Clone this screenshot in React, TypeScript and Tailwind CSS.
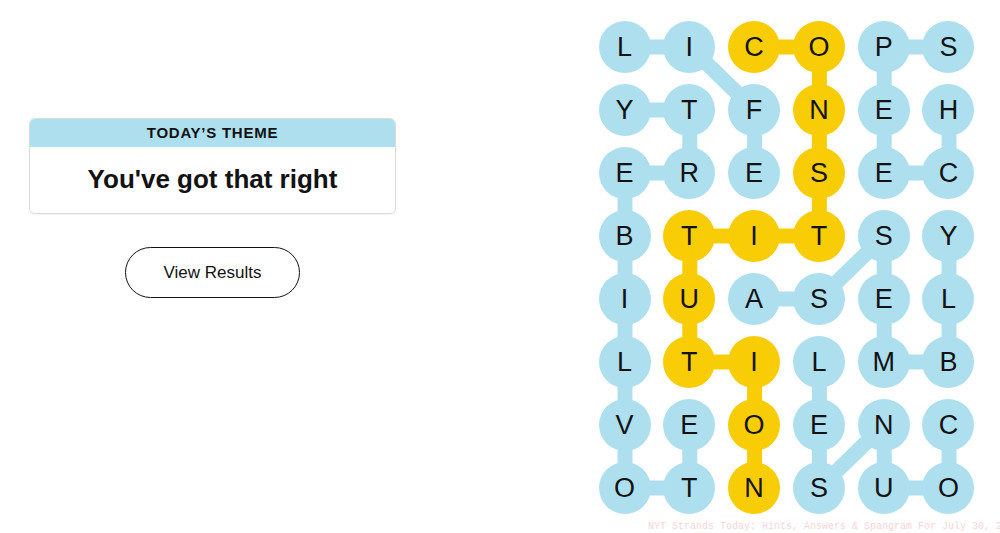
import React from 'react';

const LETTERS = [
  'LICOPS',
  'YTFNEH',
  'ERESEC',
  'BTITSY',
  'IUASEL',
  'LTILMB',
  'VEOENC',
  'OTNSUO',
];

// [row, col] of every spangram cell
const GOLD = new Set(['0,2', '0,3', '1,3', '2,3', '3,3', '3,2', '3,1', '4,1', '5,1', '5,2', '6,2', '7,2']);

type Link = [number, number, number, number];

const BLUE_LINKS: Link[] = [
  [0, 0, 0, 1], [0, 1, 1, 2], [0, 4, 0, 5], [0, 4, 1, 4],
  [1, 0, 1, 1], [1, 1, 2, 1], [1, 2, 2, 2], [1, 4, 2, 4], [1, 5, 2, 5],
  [2, 0, 2, 1], [2, 0, 3, 0], [2, 4, 2, 5],
  [3, 0, 4, 0], [3, 4, 4, 3], [3, 4, 4, 4], [3, 5, 4, 5],
  [4, 0, 5, 0], [4, 2, 4, 3], [4, 4, 5, 4], [4, 5, 5, 5],
  [5, 0, 6, 0], [5, 3, 6, 3], [5, 4, 5, 5],
  [6, 0, 7, 0], [6, 1, 7, 1], [6, 3, 7, 3], [6, 4, 7, 3], [6, 4, 7, 4], [6, 5, 7, 5],
  [7, 0, 7, 1], [7, 4, 7, 5],
];

const GOLD_LINKS: Link[] = [
  [0, 2, 0, 3], [0, 3, 1, 3], [1, 3, 2, 3], [2, 3, 3, 3], [3, 3, 3, 2], [3, 2, 3, 1],
  [3, 1, 4, 1], [4, 1, 5, 1], [5, 1, 5, 2], [5, 2, 6, 2], [6, 2, 7, 2],
];

const cx = (c: number) => 26 + c * 64.8;
const cy = (r: number) => 26 + r * 63;

function Board() {
  return (
    <div className="relative">
      {/* connectors drawn under the letter bubbles */}
      <svg className="absolute inset-0 z-0" width={376} height={493}>
        {BLUE_LINKS.map(([r1, c1, r2, c2], i) => (
          <line key={'b' + i} x1={cx(c1)} y1={cy(r1)} x2={cx(c2)} y2={cy(r2)} stroke="#aedfee" strokeWidth={15} />
        ))}
        {GOLD_LINKS.map(([r1, c1, r2, c2], i) => (
          <line key={'g' + i} x1={cx(c1)} y1={cy(r1)} x2={cx(c2)} y2={cy(r2)} stroke="#f8cd05" strokeWidth={15} />
        ))}
      </svg>
      <div className="relative z-10 grid grid-cols-[repeat(6,52px)] gap-x-[12.8px] gap-y-[11px]">
        {LETTERS.flatMap((row, r) =>
          row.split('').map((ch, c) => (
            <div
              key={r + '-' + c}
              className={
                'w-[52px] h-[52px] rounded-full flex items-center justify-center text-[27px] text-[#121212] leading-none ' +
                (GOLD.has(r + ',' + c) ? 'bg-[#f8cd05]' : 'bg-[#aedfee]')
              }
            >
              {ch}
            </div>
          ))
        )}
      </div>
    </div>
  );
}

export default function App() {
  return (
    <div className="relative w-[1000px] h-[533px] bg-white overflow-hidden flex font-['Liberation_Sans',Arial,sans-serif]">
      {/* Theme card + results button */}
      <div className="w-[425px] flex flex-col items-center pt-[118px]">
        <div className="w-[367px] rounded-[6px] border border-[#dcdcdc] overflow-hidden shadow-[0_1px_2px_rgba(0,0,0,0.06)]">
          <div className="h-[28px] bg-[#aedfee] flex items-center justify-center text-[15px] font-bold tracking-[0.05em] text-[#121212]">
            TODAY’S THEME
          </div>
          <div className="h-[66px] flex items-center justify-center pb-[2px] text-[26px] font-bold text-[#121212]">
            You've got that right
          </div>
        </div>
        <button className="mt-[33px] w-[175px] h-[51px] rounded-full border border-[#121212] bg-white text-[17px] text-[#121212]">
          View Results
        </button>
      </div>

      {/* Letter board */}
      <div className="pl-[173.5px] pt-[21px]">
        <Board />
      </div>

      <div className="absolute left-[648px] top-[519px] whitespace-nowrap text-[10px] text-[#f4d6d6] font-['Liberation_Mono',monospace]">
        NYT Strands Today: Hints, Answers &amp; Spangram For July 30, 2025
      </div>
    </div>
  );
}
